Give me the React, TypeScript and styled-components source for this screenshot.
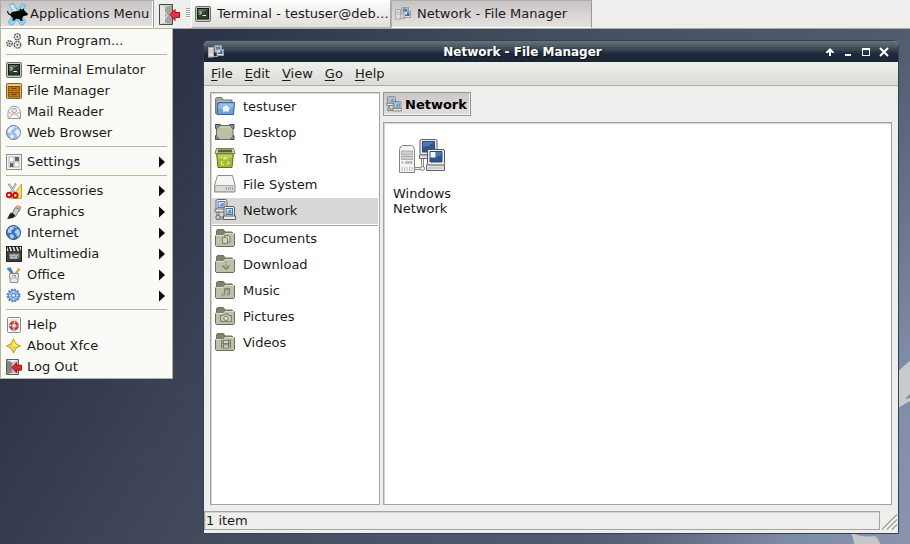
import React from "react";
import styled, { createGlobalStyle, css } from "styled-components";

const GlobalStyle = createGlobalStyle`
  *, *::before, *::after { box-sizing: border-box; }
  html, body { margin: 0; padding: 0; }
  body {
    font-family: "DejaVu Sans", sans-serif;
    font-size: 13px;
    line-height: 15px;
    color: #1a1a1a;
  }
  button { font: inherit; color: inherit; margin: 0; border: 0; background: none; text-align: left; }
  svg { display: block; flex: none; }
`;

/* ---------- icons ---------- */

type IconProps = { size?: number };

const Svg = ({ size = 16, box = 16, children }: { size?: number; box?: number; children: React.ReactNode }) => (
  <svg width={size} height={size} viewBox={`0 0 ${box} ${box}`} fill="none" aria-hidden="true">
    {children}
  </svg>
);

const XfceIcon = () => (
  <svg width="22" height="24" viewBox="0 0 22 24" aria-hidden="true">
    <path d="M3 2.500L7.500 1.500 11.500 8 16 1.500l4 1.500-5.500 9.500 5.500 7-3 3.500h-2.500L11 17.500 7 23H4l-2-3 6-7.500z" fill="#8fd3f0" stroke="#64a9c8" strokeWidth=".7" />
    <path d="M4 3.500l3-.8 4 7.300-2 2z" fill="#c6ecfa" />
    <path d="M1.500 9c.5 3 2 4 4 3.500" fill="none" stroke="#0a0a0a" strokeWidth="1.200" />
    <path d="M5 11c2-2 6-1.500 8.500-2.500L14 6.500l1.500 1.200L18 6.500l.3 2L22 12c.2 1.500-2 2-4.500 2L16 16.500l1 2.200h-2.500L13 17l-3-.3-1.500 1.800H6.300L7 16c-2.500-1-3-3-2-5z" fill="#050505" />
  </svg>
);

const ExitIcon = ({ size = 16 }: IconProps) => (
  <Svg size={size}>
    <path d="M.5.5h12v15H.5z" fill="#d6d6d4" stroke="#5d5d5b" />
    <path d="M1 1l5.500 2.500v10L1 15z" fill="#858583" />
    <path d="M6.500 3.500L12 1v14l-5.500-1.500z" fill="#c2c2c0" />
    <path d="M1 1h11L6.500 3.500z" fill="#f0f0ee" />
    <path d="M6 8.500l4.500-4.800v2.500h5v5h-5v2.500z" fill="#df2a32" stroke="#a3050d" strokeWidth=".9" />
  </Svg>
);

const DoorIcon = () => (
  <svg width="22" height="22" viewBox="0 0 22 22" fill="none" aria-hidden="true">
    <path d="M1.500 1.500h13v20h-13z" fill="#cfcfcd" stroke="#4b4b4a" />
    <path d="M2 2l5 2.500v15L2 21z" fill="#e6e6e4" />
    <path d="M7 4.500L14 2v19l-7-1.500z" fill="#a3a3a1" />
    <path d="M6 8.500l3.500 4-3.500 4" stroke="#f6f6f6" />
    <path d="M12 11.500l5-5v3h4.500v5H17v3z" fill="#e8343c" stroke="#b00a12" />
  </svg>
);

const RunIcon = () => (
  <Svg>
    <g fill="#f3f3f0" stroke="#5e5e5c" strokeWidth="1.400" strokeDasharray="1.900 .7">
      <circle cx="11.300" cy="3.800" r="3" />
      <circle cx="3.500" cy="10.500" r="2.700" />
      <circle cx="11.500" cy="11.800" r="3.300" />
    </g>
    <g fill="#555">
      <circle cx="11.300" cy="3.800" r="1" />
      <circle cx="3.500" cy="10.500" r="1" />
      <circle cx="11.500" cy="11.800" r="1.100" />
    </g>
  </Svg>
);

const TerminalIcon = () => (
  <Svg>
    <rect x=".5" y=".5" width="15" height="15" rx="1.500" fill="#c6c7c2" stroke="#6d6e69" />
    <rect x="2.500" y="2.500" width="11" height="10.500" fill="#2d3f2a" stroke="#111a10" />
    <path d="M3 3h10L3 9z" fill="#5b7058" />
    <path d="M4.500 5l2 2-2 2M7.500 9.500H11" stroke="#f2f2ee" />
  </Svg>
);

const CabinetIcon = () => (
  <Svg>
    <rect x=".5" y=".5" width="15" height="15" rx="1" fill="#e0b46a" stroke="#83642b" />
    <path d="M1.500 2h13" stroke="#f2d9a2" />
    <rect x="2.500" y="3.500" width="11" height="4.500" fill="#c9780d" stroke="#87500b" />
    <rect x="2.500" y="9.500" width="11" height="4.500" fill="#c9780d" stroke="#87500b" />
    <path d="M6 4.500v1h4v-1M6 10.500v1h4v-1" stroke="#5f4a22" strokeWidth="1.200" />
  </Svg>
);

const MailIcon = () => (
  <Svg>
    <path d="M2 7.500L5 3l3-1 3.500 1L14.500 7.500v7H2z" fill="#f8f8f7" stroke="#9a9a98" />
    <path d="M2 14.500l4.500-4.300h3.600l4.400 4.300M2 7.500l4.500 3M14.500 7.500l-4.500 3" stroke="#a7a7a5" />
    <circle cx="8.200" cy="6.500" r="2.300" fill="#e8e8e7" stroke="#9c9c9a" />
  </Svg>
);

const GlobeIcon = ({ deep = false }: { deep?: boolean }) => (
  <Svg>
    <circle cx="7.500" cy="7.500" r="7" fill={deep ? "#3f78c0" : "#9dbde6"} stroke={deep ? "#1f4c8c" : "#5b7fb2"} />
    <path
      d="M2 4.500l3-2.500 3 .5-1 2-2 1 .5 2L3.500 8l-1.800-.5zM9 6l2.500-2 2 1.500.6 3-2 3.500-1.300-1-.5-2.500-1.800-.5zM4.500 9l3 1 .5 2-2 2-2-2z"
      fill={deep ? "#c3d8f0" : "#f0f5fa"}
      opacity=".9"
    />
    <path d="M4 2.800a7 7 0 0 1 7-.4" stroke="#fff" opacity=".6" />
  </Svg>
);

const SettingsIcon = () => (
  <Svg>
    <rect x=".5" y=".5" width="15" height="15" fill="#f4f4f3" stroke="#8f8f8d" />
    <rect x="3" y="3" width="10" height="10" fill="#fff" stroke="#b5b5b3" />
    <path d="M9 3h4v4H9zM4 9h3.500v4H4z" fill="#5b6463" />
    <path d="M8 3v10M3 8h10" stroke="#a8a8a6" />
  </Svg>
);

const ScissorsIcon = () => (
  <Svg>
    <path d="M15.500 1v14.500H5z" fill="#f6dc72" stroke="#c9a222" />
    <path d="M12.800 8v5H9z" fill="#fdf6d8" />
    <path d="M2.500.8L9 9.500M10 .5L5 9.500" stroke="#8c8c89" strokeWidth="2" />
    <path d="M3 1.500L8.500 9M9.500 1.500L5.500 9" stroke="#e6e6e4" strokeWidth=".8" />
    <circle cx="3" cy="12" r="2.300" stroke="#cc0c0c" strokeWidth="1.900" />
    <circle cx="9.300" cy="12.300" r="2.300" stroke="#cc0c0c" strokeWidth="1.900" />
  </Svg>
);

const BrushIcon = () => (
  <Svg>
    <path d="M11 1.500l4 1.500-1.500 4-4.500 2-2-2z" fill="#e9b183" stroke="#b98a66" strokeWidth=".8" />
    <path d="M9.500 3.500l4 2-4 7-3.500-2.500z" fill="#cfd0ce" stroke="#6a6b69" strokeWidth=".8" />
    <path d="M5.500 8.500l3.500 2.500c0 3-3 3.500-8 4C3 13 2.500 10 5.500 8.500z" fill="#20211f" />
  </Svg>
);

const ClapperIcon = () => (
  <Svg>
    <rect x=".5" y=".5" width="15" height="15" fill="#3c3e3c" stroke="#252625" />
    <path d="M1 1h14v4H1z" fill="#ecece9" />
    <path d="M2 1l1.500 4M5.500 1L7 5M9 1l1.500 4M12.500 1L14 5" stroke="#222" strokeWidth="1.700" />
    <rect x="3" y="7.500" width="10.500" height="5" fill="#7a7d79" />
    <path d="M4 8.500l2 2 2-2 2 2 2-2M4 12h7" stroke="#f3f3f2" />
  </Svg>
);

const OfficeIcon = () => (
  <Svg>
    <path d="M1.500 1l6 7M3.500.5l4 7" stroke="#5086be" strokeWidth="2" />
    <path d="M13.500 1.500L8 9" stroke="#d5a052" strokeWidth="2.200" />
    <path d="M3.500 6.500h9l-.8 9H4.300z" fill="#ececea" stroke="#8a8b88" />
    <path d="M5.500 13l1-3 1.500 2 1-3 1.500 4" stroke="#dba2a0" strokeWidth=".9" />
    <path d="M6 9l2-1 2 1" stroke="#7795bd" />
  </Svg>
);

const GearIcon = () => (
  <Svg>
    <circle cx="7.500" cy="7.500" r="5.900" stroke="#4b80c2" strokeWidth="2" strokeDasharray="1.900 1.180" />
    <circle cx="7.500" cy="7.500" r="5.200" fill="#8db6e6" stroke="#5588c8" />
    <circle cx="7.500" cy="7.500" r="1.900" fill="#f4f8fc" stroke="#4679bb" />
    <path d="M7.500 3v2M7.500 10v2M3 7.500h2M10 7.500h2" stroke="#c3daf4" />
  </Svg>
);

const HelpIcon = () => (
  <Svg>
    <rect x="1.500" y=".5" width="13" height="15" rx="1" fill="#fbfbfa" stroke="#898987" />
    <path d="M4 3h8" stroke="#d2d2d0" />
    <circle cx="8" cy="8.800" r="3.500" stroke="#cf3434" strokeWidth="2.500" />
    <circle cx="8" cy="8.800" r="3.500" stroke="#f6f0ef" strokeWidth="2" strokeDasharray="1.500 3.998" strokeDashoffset=".75" />
    <circle cx="8" cy="8.800" r="4.700" stroke="#9d5a58" strokeWidth=".5" />
    <circle cx="8" cy="8.800" r="2" fill="#fff" stroke="#9a4644" strokeWidth=".6" />
  </Svg>
);

const StarIcon = () => (
  <Svg>
    <path d="M7.500.8L9.800 5.700 14.500 8l-4.700 2.300-2.300 4.900-2.300-4.900L.5 8l4.700-2.300z" fill="#f1da4a" stroke="#c3a30e" strokeLinejoin="round" />
    <path d="M7.500 3L9 6.500 12 8H7.500z" fill="#fff6a8" />
  </Svg>
);

const LanIcon = () => (
  <svg width="48" height="48" viewBox="0 0 48 48" fill="none" aria-hidden="true">
    <path d="M1.500 12.500q0-3 3-4h9q3 1 3 4v23h-15z" fill="#f3f3f1" stroke="#83847f" />
    <path d="M3.500 14h11v4h-11zM3.500 19.500h11v3h-11z" fill="#cfd0cd" stroke="#a0a19e" strokeWidth=".8" />
    <circle cx="4.500" cy="25.500" r="1" fill="#9a9b98" />
    <path d="M7 25.500h7.500" stroke="#b5b6b3" strokeWidth="2.500" />
    <path d="M4 30v4M6.500 30v4M9 30v4M11.500 30v4M14 30v4" stroke="#bfc0bd" />
    <path d="M17 31.500h10M24.500 22v8" stroke="#8a8b88" strokeWidth="3" />
    <path d="M17 31.500h10M24.500 22v8" stroke="#f1f1ef" />
    <circle cx="24.500" cy="31.500" r="2" fill="#f4f4f3" stroke="#8a8b88" />
    <rect x="22" y="2.500" width="17" height="15.500" rx="1.500" fill="#e9e9e7" stroke="#60615f" />
    <path d="M21.500 18h18v3.500h-18z" fill="#e3e3e1" stroke="#6c6d6a" />
    <path d="M24.500 4.500h12V15h-12z" fill="#2e558f" stroke="#2a4a7d" />
    <path d="M25 5h11l-6 4-5 1z" fill="#4f78b4" />
    <path d="M28.500 29l1-3h16l1 3v4.500h-18z" fill="#e4e4e2" stroke="#60615f" />
    <rect x="29.500" y="12.500" width="17" height="15.500" rx="1.500" fill="#f0f0ee" stroke="#565755" />
    <path d="M32 14.500h12V25H32z" fill="#2a5394" stroke="#2a4a7d" />
    <path d="M32.500 15h5v5.500h-5z" fill="#f3f6fb" />
    <path d="M38 15h5.500v3L38 20z" fill="#4b77b5" />
    <path d="M30 31h15" stroke="#b4b5b2" />
  </svg>
);

const LanSmallIcon = () => (
  <Svg>
    <rect x=".5" y="3.500" width="5" height="9.500" fill="#dcdddc" stroke="#a9aba9" />
    <path d="M1.500 6h3M1.500 8h3" stroke="#b4b5b4" />
    <path d="M5 12.500h5" stroke="#a2a4a2" />
    <rect x="7" y="1.500" width="6.500" height="6.500" fill="#dcdddc" stroke="#999c9d" />
    <path d="M8 2.500h4.500v3.500H8z" fill="#5a7db4" />
    <rect x="9" y="5.500" width="6.500" height="6" fill="#e5e6e5" stroke="#999c9d" />
    <path d="M10 6.500h4.500V10H10z" fill="#3d66a6" />
    <path d="M10 6.500h2v2h-2z" fill="#dfe8f4" />
  </Svg>
);

const NetworkIcon = ({ size = 22 }: IconProps) => (
  <Svg size={size} box={22}>
    <path d="M4 13v6h8" stroke="#6d6e6c" strokeWidth="3" />
    <path d="M4 13v6h8" stroke="#dededc" />
    <circle cx="4" cy="18.500" r="2.200" fill="#c8c9c6" stroke="#70716f" />
    <rect x="2" y=".5" width="11" height="10" rx="1.500" fill="#f4f4f2" stroke="#666765" />
    <path d="M1 10h12.500v3H1z" fill="#ececea" stroke="#666765" />
    <rect x="4" y="2.500" width="7" height="6" fill="#cfe0f4" stroke="#5d7ba6" />
    <path d="M5 7.500l2.500-3.500h2l.7 3.500z" fill="#6996cf" />
    <rect x="10" y="7.500" width="10.500" height="10" rx="1.500" fill="#f4f4f2" stroke="#5b5c5a" />
    <path d="M9.500 17h12v3.500h-12z" fill="#ececea" stroke="#5b5c5a" />
    <rect x="12" y="9.500" width="6.500" height="6" fill="#cfe0f4" stroke="#4d6f9f" />
    <path d="M13 14.500l2-3.500h2l.7 3.500z" fill="#5e8ecb" />
  </Svg>
);

const HomeIcon = () => (
  <Svg size={22} box={22}>
    <path d="M1.500 18.500V3.500l1-1h5l2 2.500h8.500v13z" fill="#9fa29d" stroke="#777975" />
    <path d="M3 6.500h14" stroke="#bfc1bd" />
    <path d="M4 7.500h16.500l-1 12H3z" fill="#6fa0d8" stroke="#35649f" />
    <path d="M4.800 8.500h14.800l-.5 4-15 1z" fill="#a8c9ed" opacity=".7" />
    <path d="M12 10l4.500 4H15v2.500H9V14H7.500z" fill="#edf5fc" />
  </Svg>
);

const DesktopIcon = () => (
  <Svg size={22} box={22}>
    <path d="M1.500 3.500h5v4h-5zM15.500 3.500h4.500v4h-4.500zM1.500 14.500h5v4h-5zM15.500 14.500h4.500v4h-4.500z" fill="#7c8fae" stroke="#3a4862" />
    <path d="M5.500 4.500h10.500l3 3.500v7l-3 3.500h-10.500L2.500 15V8z" fill="#bcbfa5" stroke="#6a6c5a" />
    <path d="M6.500 6h8.500l2 2.500" stroke="#d6d8c3" />
  </Svg>
);

const TrashIcon = () => (
  <Svg size={22} box={22}>
    <path d="M2.500 6h17l-1.500 14.500H4z" fill="#a0bb2c" stroke="#5c7410" />
    <path d="M4 8h14l-.5 3-13 1z" fill="#bfd35c" />
    <path d="M2.500 1.500h17l1.500 5H1z" fill="#e2e6d2" stroke="#718333" />
    <path d="M4 2.500h14l.5 3h-15z" fill="#5a5c55" />
    <path d="M9.500 12.500l1.500-2 2 2M14 14l1 2-2.500 1.500M10 17.500H8l-1-2 1.500-1.500" stroke="#dbe7a6" strokeWidth="1.300" />
  </Svg>
);

const DriveIcon = () => (
  <Svg size={22} box={22}>
    <path d="M3.500 2.500h15l2.500 10v6.500H.500v-6.500z" fill="#f1f1f0" stroke="#8b8c8a" />
    <path d="M1 12.500h19.500v6H1z" fill="#dadbd9" stroke="#a9aaa8" />
    <path d="M4 3.500h14l2 8H2z" fill="#f6f6f5" />
    <path d="M12.500 14v3M14.500 14v3M16.500 14v3M18.500 14v3" stroke="#a2a3a1" />
  </Svg>
);

const FolderIcon = ({ children }: { children: React.ReactNode }) => (
  <Svg size={22} box={22}>
    <path d="M2.500 18.500V3.500l1-1h6l1.500 2.500h7l1 1v12z" fill="#7f836d" stroke="#6d705d" />
    <path d="M1.500 8.500h8l1.500-2h9.500v12l-1 1h-17l-1-1z" fill="#bdc1aa" stroke="#74776300" />
    <path d="M1.500 8.500v10l1 1h17l1-1v-12" stroke="#6a6d59" />
    <path d="M2 8.500h7.500l1.500-2h9" stroke="#dcdfcd" />
    <g stroke="#7b7f69" strokeWidth="1">{children}</g>
  </Svg>
);

const DocumentsIcon = () => (
  <FolderIcon>
    <path d="M8.500 16.500v-6h4l1 1v5zM10.500 10V8.500h4l1.500 1.500v5h-2" fill="#d1d4c1" />
  </FolderIcon>
);
const DownloadIcon = () => (
  <FolderIcon>
    <path d="M12 9v1M12 11.500V13M8.500 12.500L12 16l3.500-3.500" strokeWidth="1.500" />
  </FolderIcon>
);
const MusicIcon = () => (
  <FolderIcon>
    <path d="M10.500 15.500V9.500h5v5.500M10.500 11h5" />
    <circle cx="9.300" cy="15.500" r="1.300" fill="#d1d4c1" />
    <circle cx="14.300" cy="15" r="1.300" fill="#d1d4c1" />
  </FolderIcon>
);
const PicturesIcon = () => (
  <FolderIcon>
    <path d="M6.500 16.500v-6H9l1-1.500h4l1 1.500h2.500v6z" fill="#c7cab6" />
    <circle cx="12" cy="13.300" r="2.200" fill="#e0e2d4" />
  </FolderIcon>
);
const VideosIcon = () => (
  <FolderIcon>
    <path d="M7.500 8.500v9M9.500 8.500v9M14.500 8.500v9M16.500 8.500v9M9.500 9.500h5v3h-5zM9.500 14h5v3h-5z" fill="#d5d8c6" />
    <path d="M7.500 10h2M7.500 12.500h2M7.500 15h2M14.500 10h2M14.500 12.500h2M14.500 15h2" />
  </FolderIcon>
);

/* ---------- panel ---------- */

const Screen = styled.div`
  min-height: 100vh;
  display: flex;
  flex-direction: column;
  position: relative;
  overflow: hidden;
  background: linear-gradient(
    122deg,
    #282d42 0%,
    #2d3348 19%,
    #3e4458 35%,
    #485165 53%,
    #505a6e 73%,
    #5d677c 79%,
    #7e8ba4 90%,
    #8995ae 100%
  );
`;

const Panel = styled.header`
  height: 29px;
  display: flex;
  align-items: stretch;
  background: #eeeeec;
  border-bottom: 1px solid #aaab9b;
  position: relative;
`;

const raised = css`
  background: linear-gradient(#fdfdfc, #dfdfdc);
  border-color: #fff #a5a5a3 #b5b5b3 #fff;
`;
const pressed = css`
  background: linear-gradient(#c8c4c3, #e4e2e1);
  border-color: #b0aeac #9a9997 #fff #b0aeac;
`;

const PanelButton = styled.button<{ $pressed?: boolean; $width?: number }>`
  display: flex;
  align-items: center;
  gap: 6px;
  padding: 0 3px 1px;
  width: ${(p) => (p.$width ? `${p.$width}px` : "auto")};
  border: 1px solid;
  white-space: nowrap;
  overflow: hidden;
  ${(p) => (p.$pressed ? pressed : raised)}
`;

const MenuButton = styled(PanelButton)`
  width: 154px;
  gap: 2px;
  padding-left: 5px;
  box-shadow: inset -1px -1px #fff;
`;

const Launcher = styled.button`
  width: 32px;
  padding: 0 0 1px 4px;
  display: flex;
  align-items: center;
`;

const Handle = styled.div`
  width: 4px;
  height: 10px;
  margin: 8px 1px 0 0;
  background: repeating-linear-gradient(#a0a09e 0 1px, #fbfbfa 1px 2px);
`;

/* ---------- applications menu ---------- */

const AppMenu = styled.nav`
  position: absolute;
  z-index: 2;
  top: 28px;
  left: 0;
  width: 173px;
  padding: 1px 0;
  background: #fafaf7;
  border: 1px solid #b4b598;
`;

const MenuRow = styled.button`
  display: flex;
  align-items: center;
  gap: 5px;
  width: 100%;
  height: 21px;
  padding: 0 7px 0 5px;
  &:hover { background: #e4e4df; }
`;

const RowLabel = styled.span`
  flex: 1;
  white-space: nowrap;
`;

const MenuRule = styled.hr`
  margin: 3px 5px 4px;
  border: 0;
  height: 1px;
  background: #b7b79d;
`;

const SubmenuArrow = () => (
  <svg width="6" height="12" viewBox="0 0 6 12" aria-hidden="true">
    <path d="M0 .5L6 6 0 11.500z" fill="#0c0c0c" />
  </svg>
);

type Entry = { label: string; icon: React.ReactNode; sub?: boolean };

const menuGroups: Entry[][] = [
  [{ label: "Run Program...", icon: <RunIcon /> }],
  [
    { label: "Terminal Emulator", icon: <TerminalIcon /> },
    { label: "File Manager", icon: <CabinetIcon /> },
    { label: "Mail Reader", icon: <MailIcon /> },
    { label: "Web Browser", icon: <GlobeIcon /> },
  ],
  [{ label: "Settings", icon: <SettingsIcon />, sub: true }],
  [
    { label: "Accessories", icon: <ScissorsIcon />, sub: true },
    { label: "Graphics", icon: <BrushIcon />, sub: true },
    { label: "Internet", icon: <GlobeIcon deep />, sub: true },
    { label: "Multimedia", icon: <ClapperIcon />, sub: true },
    { label: "Office", icon: <OfficeIcon />, sub: true },
    { label: "System", icon: <GearIcon />, sub: true },
  ],
  [
    { label: "Help", icon: <HelpIcon /> },
    { label: "About Xfce", icon: <StarIcon /> },
    { label: "Log Out", icon: <ExitIcon /> },
  ],
];

/* ---------- desktop and window ---------- */

const Swirl = styled.svg`
  position: absolute;
  right: 0;
  bottom: 0;
`;

const Desktop = styled.main`
  flex: 1;
  display: flex;
  padding: 11px 11px 10px 203px;
  position: relative;
`;

const Window = styled.section`
  flex: 1;
  min-width: 0;
  display: flex;
  flex-direction: column;
  position: relative;
  border: 1px solid #35404f;
  border-radius: 6px 6px 0 0;
  background: #eeeeec;
  overflow: hidden;
`;

const TitleBar = styled.div`
  height: 21px;
  display: flex;
  align-items: center;
  padding: 0 5px 0 4px;
  background: linear-gradient(#66727d 0%, #46525f 30%, #1e2a3a 62%, #1a2737 100%);
`;

const Title = styled.h1`
  flex: 1;
  margin: 0;
  padding-top: 2px;
  font-size: 12px;
  line-height: 15px;
  text-align: center;
  color: #fff;
  text-shadow: 1px 1px 1px #0b121c;
`;

const TitleButton = styled.button`
  width: 18px;
  height: 18px;
  padding: 0;
  display: flex;
  align-items: center;
  justify-content: center;
`;

const Glyph = ({ d, fill }: { d: string; fill?: boolean }) => (
  <svg width="12" height="12" viewBox="0 0 12 12" aria-hidden="true">
    <path d={d} fillRule="evenodd" fill={fill ? "#fff" : "none"} stroke={fill ? "none" : "#fff"} strokeWidth="2" />
  </svg>
);

const MenuBar = styled.nav`
  height: 24px;
  display: flex;
  align-items: center;
  gap: 12px;
  padding: 0 7px;
  background: linear-gradient(#efefed, #dadbd5);
  border-bottom: 1px solid #adada5;
`;

const MenuBarItem = styled.button`
  padding: 0;
`;

const Mnemonic = styled.span`
  text-decoration: underline;
  text-underline-offset: 2px;
  text-decoration-thickness: 1px;
`;

const Body = styled.div`
  flex: 1;
  display: flex;
  gap: 3px;
  padding: 6px 6px;
  min-height: 0;
`;

const frame = css`
  background: #fff;
  border: 1px solid #a3a39f;
  box-shadow: inset 1px 1px #d4d4d0;
`;

const Sidebar = styled.nav`
  width: 170px;
  flex: none;
  padding: 1px;
  ${frame}
`;

const Place = styled.button<{ $selected?: boolean }>`
  display: flex;
  align-items: center;
  gap: 7px;
  width: 100%;
  height: 26px;
  padding: 0 2px 2px;
  background: ${(p) => (p.$selected ? "#d7d7d5" : "transparent")};
`;

const PlaceRule = styled.hr`
  height: 1px;
  margin: 1px 0 0;
  border: 0;
  background: #a3a3a0;
`;

const MainColumn = styled.div`
  flex: 1;
  min-width: 0;
  display: flex;
  flex-direction: column;
  align-items: stretch;
  gap: 6px;
`;

const PathButton = styled.button`
  align-self: flex-start;
  height: 24px;
  display: flex;
  align-items: center;
  gap: 3px;
  padding: 0 3px 0 2px;
  font-weight: bold;
  color: #000;
  border: 1px solid #969592;
  background: linear-gradient(#cac7c5, #e2e0df);
  box-shadow: inset -1px -1px #f5f5f4;
`;

const FileView = styled.div`
  flex: 1;
  padding: 14px 9px;
  ${frame}
`;

const FileItem = styled.button`
  display: flex;
  flex-direction: column;
  gap: 1px;
  width: 64px;
  padding: 0;
`;

const FileArt = styled.span`
  padding: 0 0 0 5px;
`;

const StatusRow = styled.footer`
  display: flex;
  align-items: flex-end;
  gap: 2px;
  padding-bottom: 3px;
`;

const Status = styled.div`
  flex: 1;
  height: 19px;
  padding: 1px 1px 0;
  border: 1px solid #a3a39f;
  box-shadow: inset 1px 1px #d4d4d0;
`;

const places: Entry[] = [
  { label: "testuser", icon: <HomeIcon /> },
  { label: "Desktop", icon: <DesktopIcon /> },
  { label: "Trash", icon: <TrashIcon /> },
  { label: "File System", icon: <DriveIcon /> },
  { label: "Network", icon: <NetworkIcon /> },
];

const bookmarks: Entry[] = [
  { label: "Documents", icon: <DocumentsIcon /> },
  { label: "Download", icon: <DownloadIcon /> },
  { label: "Music", icon: <MusicIcon /> },
  { label: "Pictures", icon: <PicturesIcon /> },
  { label: "Videos", icon: <VideosIcon /> },
];

const PlaceButton = ({ entry, selected }: { entry: Entry; selected?: boolean }) => (
  <Place type="button" $selected={selected} aria-current={selected ? "page" : undefined}>
    {entry.icon}
    {entry.label}
  </Place>
);

export default function App() {
  return (
    <Screen>
      <GlobalStyle />
      <Swirl width="60" height="190" viewBox="0 0 60 190" aria-hidden="true">
        <path d="M60 7Q54 11 46 20V55Q53 51 60 47V44L55 45 60 40z" fill="#c9cacb" />
        <path d="M0 178Q4 184 4 190H30Q29 185 25 182 12 184 0 178z" fill="#c6c7c9" />
      </Swirl>
      <Panel>
        <MenuButton type="button" $pressed>
          <XfceIcon />
          Applications Menu
        </MenuButton>
        <Launcher type="button" aria-label="Log out">
          <DoorIcon />
        </Launcher>
        <Handle />
        <PanelButton type="button" $width={200}>
          <TerminalIcon />
          Terminal - testuser@deb…
        </PanelButton>
        <PanelButton type="button" $width={201} $pressed>
          <LanSmallIcon />
          Network - File Manager
        </PanelButton>
      </Panel>

      <AppMenu aria-label="Applications">
        {menuGroups.map((group, i) => (
          <React.Fragment key={i}>
            {i > 0 && <MenuRule />}
            {group.map((e) => (
              <MenuRow type="button" key={e.label}>
                {e.icon}
                <RowLabel>{e.label}</RowLabel>
                {e.sub && <SubmenuArrow />}
              </MenuRow>
            ))}
          </React.Fragment>
        ))}
      </AppMenu>

      <Desktop>
        <Window>
          <TitleBar>
            <LanSmallIcon />
            <Title>Network - File Manager</Title>
            <TitleButton type="button" aria-label="Shade">
              <Glyph fill d="M6 2l4 4v1H8L7 6v4H5V6L4 7H2V6z" />
            </TitleButton>
            <TitleButton type="button" aria-label="Minimize">
              <Glyph fill d="M3 8h6v2H3z" />
            </TitleButton>
            <TitleButton type="button" aria-label="Maximize">
              <Glyph fill d="M2 2h8v8H2zM3 4v5h6V4z" />
            </TitleButton>
            <TitleButton type="button" aria-label="Close">
              <Glyph d="M2 2l8 8M10 2l-8 8" />
            </TitleButton>
          </TitleBar>
          <MenuBar>
            {["File", "Edit", "View", "Go", "Help"].map((m) => (
              <MenuBarItem type="button" key={m}>
                <Mnemonic>{m[0]}</Mnemonic>
                {m.slice(1)}
              </MenuBarItem>
            ))}
          </MenuBar>
          <Body>
            <Sidebar aria-label="Places">
              {places.map((p) => (
                <PlaceButton key={p.label} entry={p} selected={p.label === "Network"} />
              ))}
              <PlaceRule />
              {bookmarks.map((p) => (
                <PlaceButton key={p.label} entry={p} />
              ))}
            </Sidebar>
            <MainColumn>
              <PathButton type="button">
                <NetworkIcon size={16} />
                Network
              </PathButton>
              <FileView>
                <FileItem type="button">
                  <FileArt>
                    <LanIcon />
                  </FileArt>
                  <span>Windows Network</span>
                </FileItem>
              </FileView>
            </MainColumn>
          </Body>
          <StatusRow>
            <Status role="status">1 item</Status>
            <svg width="16" height="16" viewBox="0 0 16 16" aria-hidden="true">
              <path d="M0 15.500L15 .5M5 15.500L15 5.500M10 15.500l5-5" stroke="#a0a09a" strokeWidth="1.500" />
              <path d="M2 15.500L15 2.500M7 15.500L15 7.500M12 15.500l3-3" stroke="#fff" />
            </svg>
          </StatusRow>
        </Window>
      </Desktop>
    </Screen>
  );
}
